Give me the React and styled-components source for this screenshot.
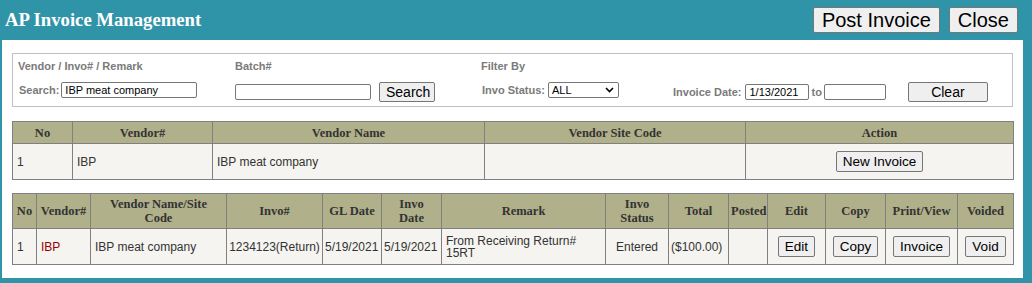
import React from "react";
import styled, { createGlobalStyle } from "styled-components";

const Global = createGlobalStyle`
  html, body { margin: 0; padding: 0; }
  body { background: #2f94a8; font-family: "Liberation Sans", Arial, sans-serif; }
`;

const Page = styled.div`
  width: 1032px;
  height: 283px;
  background: #2f94a8;
  box-sizing: border-box;
  padding: 0 9px 5px 2px;
  display: flex;
  flex-direction: column;
`;

const TopBar = styled.div`
  height: 40px;
  display: flex;
  align-items: center;
  justify-content: space-between;
  padding-left: 3px;
`;

const Title = styled.h1`
  margin: 0 0 1px 0;
  font-family: "Palatino Linotype", "Liberation Serif", serif;
  font-weight: bold;
  font-size: 18.7px;
  color: #fff;
`;

const TopButtons = styled.div`
  display: flex;
  gap: 9px;
  margin-right: 5px;
`;

const Btn = styled.button`
  font-family: "Liberation Sans", Arial, sans-serif;
  font-size: ${(p) => p.$fs || 13}px;
  height: ${(p) => p.$h || 20}px;
  padding: 0 ${(p) => p.$px || 6}px;
  width: ${(p) => (p.$w ? p.$w + "px" : "auto")};
  margin-left: ${(p) => p.$ml || 0}px;
  background: #efefef;
  border: 1px solid #767676;
  border-radius: 2px;
  color: #000;
  line-height: 1;
`;

const Panel = styled.div`
  flex: 1;
  background: #fff;
  padding: 13px 10px 0 10px;
  display: flex;
  flex-direction: column;
`;

const FilterBox = styled.div`
  height: 54px;
  border: 1px solid #c0c0c0;
  box-sizing: border-box;
  display: flex;
  padding: 0 0 0 5px;
  font-size: 11px;
  font-weight: bold;
  color: #7a7a7a;
`;

const FGroup = styled.div`
  width: ${(p) => p.$w}px;
  display: flex;
  flex-direction: column;
`;

const FLabel = styled.div`
  height: 13px;
  margin-top: 6px;
  line-height: 13px;
`;

const FRow = styled.div`
  display: flex;
  align-items: center;
  margin-top: 9px;
  gap: ${(p) => p.$gap || 0}px;
`;

const Lbl = styled.span`
  margin-left: ${(p) => p.$ml || 0}px;
  margin-right: ${(p) => p.$mr || 2}px;
`;

const Input = styled.input`
  box-sizing: border-box;
  width: ${(p) => p.$w}px;
  height: 16px;
  margin-left: ${(p) => p.$ml || 0}px;
  border: 1px solid #767676;
  border-radius: 2px;
  padding: 0 3px;
  font-family: "Liberation Sans", Arial, sans-serif;
  font-size: 11px;
  color: #000;
  outline: none;
`;

const Select = styled.div`
  box-sizing: border-box;
  width: 71px;
  height: 16px;
  margin-left: 1px;
  border: 1px solid #767676;
  border-radius: 2px;
  display: flex;
  align-items: center;
  justify-content: space-between;
  padding: 0 4px 0 3px;
  font-weight: normal;
  color: #000;
  font-size: 11px;
`;

const Table = styled.table`
  width: 1001px;
  border-collapse: collapse;
  table-layout: fixed;
  margin-top: ${(p) => p.$mt}px;
  border: 1px solid #808080;
`;

const Th = styled.th`
  background: #b0b08a;
  border: 1px solid #808080;
  font-family: "Palatino Linotype", "Liberation Serif", serif;
  font-size: 12.5px;
  font-weight: bold;
  color: #333;
  height: ${(p) => p.$h}px;
  padding: 0 2px;
  line-height: 14px;
  text-align: center;
  box-sizing: border-box;
  white-space: nowrap;
`;

const Td = styled.td`
  background: #f5f4f0;
  border: 1px solid #808080;
  font-size: 12px;
  color: ${(p) => p.$color || "#333"};
  height: 35px;
  padding: 0 ${(p) => (p.$pad != null ? p.$pad : 4)}px;
  text-align: ${(p) => p.$align || "left"};
  line-height: 12px;
  white-space: nowrap;
`;

const SmallBtn = styled(Btn)`
  height: 21px;
  font-size: 13.5px;
  padding: 0 6px;
  margin: 0;
`;

const cols1 = [60, 140, 272, 261, 268];
const cols2 = [24, 54, 136, 96, 59, 60, 164, 63, 60, 39, 58, 60, 72, 56];

export default function App() {
  return (
    <>
      <Global />
      <Page>
        <TopBar>
          <Title>AP Invoice Management</Title>
          <TopButtons>
            <Btn $fs={20} $h={26} $px={8}>Post Invoice</Btn>
            <Btn $fs={20} $h={26} $px={8}>Close</Btn>
          </TopButtons>
        </TopBar>
        <Panel>
          <FilterBox>
            <FGroup $w={217}>
              <FLabel>Vendor / Invo# / Remark</FLabel>
              <FRow>
                <Lbl $ml={1}>Search:</Lbl>
                <Input $w={136} defaultValue="IBP meat company" />
              </FRow>
            </FGroup>
            <FGroup $w={246}>
              <FLabel>Batch#</FLabel>
              <FRow $gap={8}>
                <Input $w={136} defaultValue="" />
                <Btn $fs={14} $h={20} $w={56}>Search</Btn>
              </FRow>
            </FGroup>
            <FGroup $w={192}>
              <FLabel>Filter By</FLabel>
              <FRow>
                <Lbl $ml={1}>Invo Status:</Lbl>
                <Select>
                  <span>ALL</span>
                  <svg width="9" height="6" viewBox="0 0 9 6">
                    <path d="M1 1 L4.5 4.5 L8 1" stroke="#000" strokeWidth="1.6" fill="none" />
                  </svg>
                </Select>
              </FRow>
            </FGroup>
            <FGroup $w={330}>
              <FLabel>&nbsp;</FLabel>
              <FRow>
                <Lbl>Invoice Date:</Lbl>
                <Input $w={64} $ml={2} defaultValue="1/13/2021" />
                <Lbl $ml={2} $mr={2}>to</Lbl>
                <Input $w={62} defaultValue="" />
                <Btn $fs={14} $h={20} $w={80} $ml={22}>Clear</Btn>
              </FRow>
            </FGroup>
          </FilterBox>

          <Table $mt={14}>
            <colgroup>
              {cols1.map((w, i) => (
                <col key={i} style={{ width: w }} />
              ))}
            </colgroup>
            <thead>
              <tr>
                <Th $h={22}>No</Th>
                <Th $h={22}>Vendor#</Th>
                <Th $h={22}>Vendor Name</Th>
                <Th $h={22}>Vendor Site Code</Th>
                <Th $h={22}>Action</Th>
              </tr>
            </thead>
            <tbody>
              <tr>
                <Td>1</Td>
                <Td>IBP</Td>
                <Td>IBP meat company</Td>
                <Td></Td>
                <Td $align="center">
                  <SmallBtn>New Invoice</SmallBtn>
                </Td>
              </tr>
            </tbody>
          </Table>

          <Table $mt={13}>
            <colgroup>
              {cols2.map((w, i) => (
                <col key={i} style={{ width: w }} />
              ))}
            </colgroup>
            <thead>
              <tr>
                <Th $h={35}>No</Th>
                <Th $h={35}>Vendor#</Th>
                <Th $h={35}>Vendor Name/Site<br />Code</Th>
                <Th $h={35}>Invo#</Th>
                <Th $h={35}>GL Date</Th>
                <Th $h={35}>Invo<br />Date</Th>
                <Th $h={35}>Remark</Th>
                <Th $h={35}>Invo<br />Status</Th>
                <Th $h={35}>Total</Th>
                <Th $h={35}>Posted</Th>
                <Th $h={35}>Edit</Th>
                <Th $h={35}>Copy</Th>
                <Th $h={35}>Print/View</Th>
                <Th $h={35}>Voided</Th>
              </tr>
            </thead>
            <tbody>
              <tr>
                <Td>1</Td>
                <Td $color="#990000">IBP</Td>
                <Td>IBP meat company</Td>
                <Td $align="center" $pad={2}>1234123(Return)</Td>
                <Td $pad={2}>5/19/2021</Td>
                <Td $pad={2}>5/19/2021</Td>
                <Td>From Receiving Return#<br />15RT</Td>
                <Td $align="center">Entered</Td>
                <Td $pad={2}>($100.00)</Td>
                <Td></Td>
                <Td $align="center"><SmallBtn>Edit</SmallBtn></Td>
                <Td $align="center"><SmallBtn>Copy</SmallBtn></Td>
                <Td $align="center"><SmallBtn>Invoice</SmallBtn></Td>
                <Td $align="center"><SmallBtn>Void</SmallBtn></Td>
              </tr>
            </tbody>
          </Table>
        </Panel>
      </Page>
    </>
  );
}
